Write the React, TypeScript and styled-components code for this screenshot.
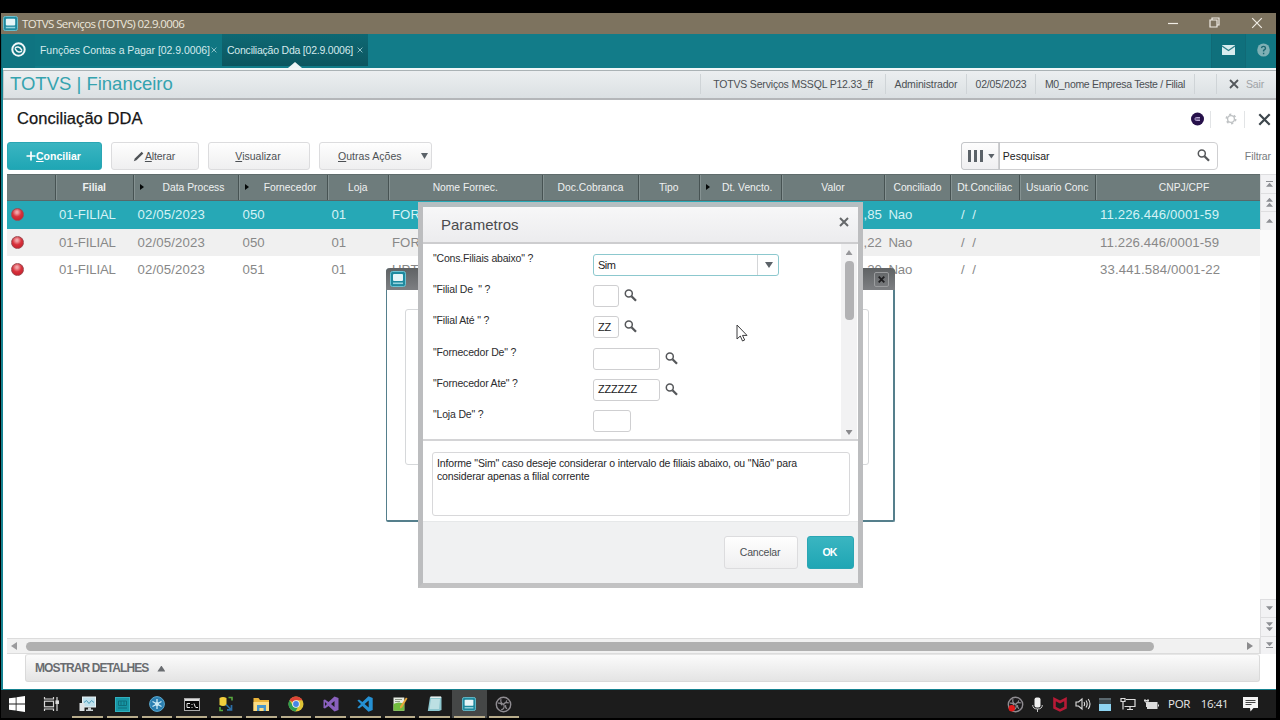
import React from "react";
import styled, { createGlobalStyle } from "styled-components";

const GlobalStyle = createGlobalStyle`
  * {
    box-sizing: border-box;
  }
  body {
    margin: 0;
    background: #000;
    overflow: hidden;
    font-family: "Liberation Sans", Arial, sans-serif;
  }
`;

const Screen = styled.div`
  position: relative;
  display: flex;
  flex-direction: column;
  width: 1280px;
  height: 720px;
  padding: 13px 4px 2px 1px;
  background: #000;
  overflow: hidden;
`;

interface TextProps {
  $size?: number;
  $spacing?: number;
  $color?: string;
  $bold?: boolean;
}

const Text = styled.span<TextProps>`
  font-size: ${({ $size = 10.5 }) => $size}px;
  letter-spacing: ${({ $spacing = 0 }) => $spacing}px;
  color: ${({ $color = "#4c5054" }) => $color};
  font-weight: ${({ $bold }) => ($bold ? 700 : 400)};
  line-height: 1.15;
  white-space: pre;
`;

/* title bar */

const TitleBar = styled.div`
  display: flex;
  align-items: center;
  height: 21px;
  padding-left: 2px;
  background: #7d735f;
`;

const TitleText = styled.span`
  flex: 1;
  margin-left: 4px;
  font-family: "Open Sans", sans-serif;
  font-size: 11.5px;
  letter-spacing: -0.6px;
  line-height: 20px;
  color: #ece7dc;
`;

const WindowControls = styled.div`
  display: flex;
  align-items: center;
  gap: 31px;
  padding: 0 13px 2px 0;
`;

/* tabs */

const TabBar = styled.div`
  display: flex;
  height: 34px;
  background: #127c89;
  border-left: 1px solid #0d6470;
`;

const HomeTab = styled.div`
  display: flex;
  align-items: center;
  justify-content: center;
  width: 33px;
  background: #0f7481;
  padding-bottom: 3px;
`;

const Tab = styled.div<{ $active?: boolean; $width: number }>`
  position: relative;
  display: flex;
  align-items: center;
  justify-content: space-between;
  width: ${({ $width }) => $width}px;
  padding: 0 5px 0 5px;
  margin-bottom: 2px;
  background: ${({ $active }) => ($active ? "linear-gradient(#0e6873, #0c5660)" : "#0f7682")};
`;

const TabNotch = styled.div`
  position: absolute;
  left: 66px;
  bottom: -2px;
  border: 7px solid transparent;
  border-top: 0;
  border-bottom: 6px solid #eef6f7;
`;

const TabIcons = styled.div`
  display: flex;
  margin-left: auto;
`;

const TabIcon = styled.div`
  display: flex;
  align-items: center;
  justify-content: center;
  width: 34px;
  padding-bottom: 3px;
  background: #0f707c;
  border-left: 1px solid #106a76;
  &:last-child {
    width: 31px;
    padding-left: 5px;
    background: #117682;
  }
`;

/* product header */

const Client = styled.div`
  flex: 1;
  display: flex;
  flex-direction: column;
  background: #fff;
  border-left: 2px solid #168290;
  border-bottom: 1px solid #168290;
`;

const ProductBar = styled.div`
  display: flex;
  align-items: center;
  height: 32px;
  border-top: 2px solid #f2f8f9;
  border-bottom: 2px solid #b4b6b9;
  box-shadow: inset 0 1px #aab2b5, inset 1px 0 #c4cacd;
  background: linear-gradient(#eceff1, #dbe0e3);
  padding-left: 7px;
`;

const ProductInfo = styled.div`
  display: flex;
  height: 100%;
  margin-left: auto;
`;

const InfoCell = styled.div<{ $width: number }>`
  display: flex;
  align-items: center;
  justify-content: center;
  gap: 7px;
  width: ${({ $width }) => $width}px;
  margin: 4px 0;
  border-left: 1px solid #cfd4d7;
`;

const PageHeader = styled.div`
  display: flex;
  align-items: center;
  justify-content: space-between;
  height: 36px;
  padding: 0 5px 0 14px;
`;

const PageTitle = styled.h1`
  margin: 0;
  font-size: 16.5px;
  font-weight: 400;
  letter-spacing: 0.05px;
  line-height: 19px;
  color: #161616;
  -webkit-text-stroke: 0.25px #161616;
`;

const HeaderIcons = styled.div`
  display: flex;
  align-items: center;
  height: 17px;
  margin-top: 2px;
`;

const Divider = styled.span`
  width: 1px;
  height: 17px;
  margin: 0 13px 0 6px;
  background: #e2e4e6;
`;

/* toolbar */

const Toolbar = styled.div`
  display: flex;
  height: 38px;
  padding: 6px 5px 4px 4px;
`;

const Button = styled.div<{ $primary?: boolean; $width: number; $height?: number }>`
  display: flex;
  align-items: center;
  justify-content: center;
  width: ${({ $width }) => $width}px;
  height: ${({ $height = 28 }) => $height}px;
  padding-right: 2px;
  border-radius: 3px;
  border: 1px solid ${({ $primary }) => ($primary ? "#2aa6b4" : "#dcdcde")};
  background: ${({ $primary }) =>
    $primary ? "linear-gradient(#3ab5c1, #1fa6b4)" : "linear-gradient(#fefefe, #efeff0)"};
`;

const Actions = styled.div`
  display: flex;
  gap: 9px;
`;

const MenuButton = styled(Button)`
  justify-content: space-between;
  padding: 0 3px 0 18px;
`;

const SearchBox = styled.div`
  display: flex;
  align-items: center;
  width: 257px;
  height: 28px;
  margin-left: auto;
  padding: 0 7px 1px 0;
  border: 1px solid #cfcfd1;
  border-radius: 4px;
`;

const SearchText = styled.span`
  flex: 1;
  font-size: 10.5px;
  color: #222;
`;

const FilterLink = styled.span`
  margin: 8px 0 0 27px;
  font-size: 10.5px;
  letter-spacing: -0.1px;
  line-height: 12px;
  color: #777b7e;
`;

const SearchMode = styled.div`
  display: flex;
  align-items: center;
  justify-content: space-between;
  width: 37px;
  height: 26px;
  margin: 1px 4px 0 0;
  padding: 0 3px 0 6px;
  border-right: 1px solid #cfcfd1;
  border-radius: 3px 0 0 3px;
  box-shadow: 0 0 0 1px #c4c6c9;
  background: linear-gradient(#fdfdfd, #efeff1);
`;

const Bars = styled.span`
  display: flex;
  gap: 3px;
  i {
    width: 3px;
    height: 12px;
    background: #5b6268;
  }
`;

const Arrow = styled.span<{ $dir: "up" | "down" | "left" | "right"; $color?: string; $w?: number; $h?: number }>`
  flex: none;
  display: block;
  width: ${({ $w = 7 }) => $w}px;
  height: ${({ $h = 5 }) => $h}px;
  background: ${({ $color = "#5b6268" }) => $color};
  clip-path: ${({ $dir }) =>
    ({
      up: "polygon(50% 0, 100% 100%, 0 100%)",
      down: "polygon(0 0, 100% 0, 50% 100%)",
      left: "polygon(100% 0, 100% 100%, 0 50%)",
      right: "polygon(0 0, 100% 50%, 0 100%)",
    })[$dir]};
`;

/* grid */

const columns =
  "48.5px 78.5px 105px 89px 60.5px 154.5px 96px 60.5px 82.5px 103px 66px 68.5px 76.5px 1fr";

const GridArea = styled.div`
  flex: 1;
  display: flex;
  padding-left: 4px;
`;

const GridMain = styled.div`
  flex: 1;
  display: flex;
  flex-direction: column;
`;

const GridHeader = styled.div`
  display: grid;
  grid-template-columns: ${columns};
  height: 27px;
  background: #6e7c7c;
  border-top: 1px solid #5f6c6c;
  border-bottom: 1px solid #56696a;
`;

const HeaderCell = styled.div<{ $shift?: number }>`
  position: relative;
  display: flex;
  align-items: center;
  justify-content: center;
  padding-left: ${({ $shift = 0 }) => $shift}px;
  border-right: 1px solid #475353;
  box-shadow: 1px 0 #859292;
  &:last-child {
    border-right: 0;
    box-shadow: none;
  }
`;

const SortMark = styled.span`
  position: absolute;
  left: 6px;
  top: 9px;
  border: 3.5px solid transparent;
  border-left: 4.5px solid #050808;
  border-right: 0;
`;

const GridRow = styled.div<{ $selected?: boolean; $striped?: boolean }>`
  display: grid;
  grid-template-columns: ${columns};
  align-items: center;
  height: 27.5px;
  color: ${({ $selected }) => ($selected ? "#d5f2f5" : "#888")};
  background: ${({ $selected, $striped }) => ($selected ? "#26a8b6" : $striped ? "#f0f0f0" : "#fff")};
`;

const Cell = styled.div<{ $right?: boolean; $indent?: number; $spacing?: number }>`
  padding-left: ${({ $indent = 3.5 }) => $indent}px;
  padding-right: 3px;
  text-align: ${({ $right }) => ($right ? "right" : "left")};
  font-size: 13.2px;
  letter-spacing: ${({ $spacing = 0.05 }) => $spacing}px;
  white-space: pre;
  overflow: hidden;
`;

const Status = styled.span`
  display: block;
  width: 13px;
  height: 13px;
  border-radius: 50%;
  border: 1px solid #9c4a50;
  background: radial-gradient(circle at 45% 30%, #f2a4a8 0 10%, #d8323c 45%, #c01826);
`;

const VScroll = styled.div`
  display: flex;
  flex-direction: column;
  justify-content: space-between;
  width: 16px;
  height: 480px;
  background: #fafafa;
`;

const StepButtons = styled.div`
  display: flex;
  flex-direction: column;
`;

const StepButton = styled.div`
  display: flex;
  flex-direction: column;
  align-items: center;
  justify-content: center;
  gap: 1px;
  height: 18.5px;
  padding-left: 2px;
  background: #f2f2f4;
  border: 1px solid #dedee0;
  border-right: 0;
  border-bottom: 0;
`;

const StepLine = styled.i`
  width: 7px;
  height: 1px;
  background: #8d8f94;
`;

const HScroll = styled.div`
  display: flex;
  align-items: center;
  width: 1253px;
  height: 16px;
  margin-top: auto;
  padding: 0 6px 0 4px;
  border: 1px solid #dcdcdc;
  border-left: 0;
  background: #f1f1f1;
`;

const HThumb = styled.div`
  width: 1128px;
  height: 9px;
  margin: 1px auto 0 9px;
  border-radius: 5px;
  background: #b0b0b0;
`;

const Details = styled.div`
  display: flex;
  align-items: center;
  gap: 9px;
  width: 1235px;
  height: 28px;
  margin: 0 0 7px 22px;
  padding: 1px 0 0 9px;
  border: 1px solid #dadada;
  border-top-color: #e6e6e6;
  border-radius: 3px;
  background: linear-gradient(#fbfbfb, #e4e4e4);
`;

/* window behind the parameters dialog */

const BackWindow = styled.div`
  position: absolute;
  left: 386px;
  top: 268px;
  width: 509px;
  height: 254px;
  border: 1px solid #557f8c;
  border-width: 0 2px 2px 1px;
  border-radius: 4px 4px 2px 2px;
  background: #fff;
`;

const BackTitle = styled.div`
  display: flex;
  align-items: center;
  justify-content: space-between;
  height: 22px;
  margin: 0 -2px 0 -1px;
  padding: 0 6px 0 4px;
  border-radius: 4px 4px 0 0;
  background: linear-gradient(#5f6264, #7d7f82);
`;

const BackClose = styled.span`
  display: flex;
  align-items: center;
  justify-content: center;
  width: 15px;
  height: 15px;
  border: 1px solid #9a9c9e;
  border-radius: 2px;
`;

const BackPanel = styled.div`
  width: 464px;
  height: 156px;
  margin: 19px 0 0 18px;
  border: 1px solid #d6d8da;
  border-radius: 3px;
`;

/* parameters dialog */

const Dialog = styled.div`
  position: absolute;
  left: 418px;
  top: 202px;
  width: 445px;
  height: 386px;
  display: flex;
  flex-direction: column;
  border: 5px solid #bcbdbf;
  border-bottom-color: #c2c2c3;
  border-top-color: #b4bec1;
  background: #fff;
`;

const DialogTitle = styled.div`
  display: flex;
  justify-content: space-between;
  height: 37px;
  padding: 9px 9px 0 18px;
  border-bottom: 2px solid #cdcdcf;
  background: linear-gradient(#f7f7f8, #ececee);
`;

const DialogClose = styled.span`
  margin-top: 1px;
  line-height: 0;
`;

const Form = styled.div`
  display: flex;
  height: 197px;
  border-bottom: 2px solid #d4d4d6;
`;

const Fields = styled.div`
  flex: 1;
  padding: 5px 0 0 10px;
`;

const FieldRow = styled.div`
  display: flex;
  align-items: flex-start;
  height: 31.2px;
`;

const FieldLabel = styled.label`
  width: 160px;
  padding-top: 3px;
  font-size: 10.5px;
  letter-spacing: -0.18px;
  line-height: 12px;
  color: #2c2c2e;
  white-space: pre;
`;

const Input = styled.div<{ $width: number; $focus?: boolean }>`
  display: flex;
  align-items: center;
  justify-content: space-between;
  width: ${({ $width }) => $width}px;
  height: 22px;
  margin-top: 5px;
  padding-left: 4px;
  border: 1px solid ${({ $focus }) => ($focus ? "#8cc8ce" : "#cfcfd1")};
  border-radius: 3px;
`;

const Drop = styled.span`
  display: flex;
  align-items: center;
  justify-content: center;
  width: 21px;
  height: 20px;
  padding-left: 2px;
  border-left: 1px solid #d4d6d8;
`;

const LookupIcon = styled.span`
  margin: 9px 0 0 5px;
  line-height: 0;
`;

const FormScroll = styled.div`
  display: flex;
  flex-direction: column;
  align-items: center;
  width: 16px;
  margin-right: 1px;
  padding: 6px 0 4px;
  background: #f2f2f3;
`;

const FormThumb = styled.div`
  width: 9px;
  height: 59px;
  margin: 6px 0 auto;
  border-radius: 4px;
  background: #b2b2b4;
`;

const Help = styled.div`
  height: 64px;
  margin: 11px 8px 5px 9px;
  padding: 4px;
  border: 1px solid #d8d8da;
  border-radius: 3px;
  font-size: 10.5px;
  letter-spacing: -0.15px;
  line-height: 13px;
  color: #262628;
  white-space: pre;
`;

const DialogFooter = styled.div`
  flex: 1;
  display: flex;
  justify-content: flex-end;
  gap: 9px;
  padding: 14px 4px 0 0;
  border-top: 1px solid #e6e8e9;
  background: #f0f1f2;
`;

const Pointer = styled.svg`
  position: absolute;
  left: 736px;
  top: 324px;
`;

/* taskbar */

const Taskbar = styled.div`
  display: flex;
  height: 28px;
  background: #1c1c1c;
`;

const Task = styled.div<{ $running?: boolean; $active?: boolean }>`
  display: flex;
  align-items: center;
  justify-content: center;
  width: 34.7px;
  background: ${({ $active }) => ($active ? "#454747" : "transparent")};
  padding-top: ${({ $running }) => ($running ? 2 : 0)}px;
  padding-right: ${({ $running }) => ($running ? 0 : 3)}px;
  ${({ $running }) =>
    $running &&
    `
    border: solid transparent;
    border-width: 0 0 2px;
    border-image: linear-gradient(90deg, transparent 4px, #b9ad8c 4px, #b9ad8c 31px, transparent 31px) 2;
  `}
`;

const Tray = styled.div`
  display: flex;
  align-items: center;
  margin-left: auto;
  padding-right: 8px;
`;

const TrayItem = styled.div<{ $width: number }>`
  display: flex;
  align-items: center;
  justify-content: center;
  width: ${({ $width }) => $width}px;
`;

const TrayText = styled.span`
  font-family: "Open Sans", sans-serif;
  font-size: 11.5px;
  letter-spacing: -0.4px;
  line-height: 16px;
  color: #e8e8e8;
`;

function MonitorIcon({ size = 15 }: { size?: number }) {
  return (
    <svg width={size} height={size} viewBox="0 0 16 16">
      <rect x="0.5" y="0.5" width="15" height="15" rx="2" fill="#1f8a9f" stroke="#6cc3d3" />
      <rect x="3" y="3" width="10" height="7" rx="1" fill="#e6f5f8" />
      <rect x="3" y="11.5" width="10" height="1.6" fill="#96d3de" />
    </svg>
  );
}

function CrossIcon({ size, color, width = 1.5 }: { size: number; color: string; width?: number }) {
  return (
    <svg width={size} height={size} viewBox="0 0 10 10">
      <path d="M1 1L9 9M9 1L1 9" stroke={color} strokeWidth={width} />
    </svg>
  );
}

function SearchIcon({ color = "#55575a" }: { color?: string }) {
  return (
    <svg width="13" height="13" viewBox="0 0 13 13" fill="none" stroke={color}>
      <circle cx="4.8" cy="4.6" r="3.5" strokeWidth="1.5" />
      <path d="M7.5 7.3L12 11.8" strokeWidth="2.3" />
    </svg>
  );
}

function ObsIcon({ recording }: { recording?: boolean }) {
  return (
    <svg width="17" height="17" viewBox="0 0 17 17" fill="none">
      <circle cx="8.5" cy="8.5" r="7.2" fill="#1b1a1c" stroke="#8f8c91" strokeWidth="1.4" />
      <path
        d="M6 3.2c-.8 2.8.6 4.7 2.8 5.2M13.8 6.8c-2.8-.5-4.7 0-5 1.6M6.2 13.7c2.4-.4 3.8-2.6 2.6-5.3M3 7.2c2-.5 3.5.2 4 2.2M11.8 4.3c-.4 1.8-1.2 2.9-2.7 3.4M12 12.8c-1.4-1-1.8-2.3-1.3-3.7"
        stroke="#8f8c91"
        strokeWidth="1.2"
      />
      {recording && <circle cx="4.8" cy="12.2" r="3.2" fill="#e01a1a" />}
    </svg>
  );
}

const taskIcons: { running?: boolean; active?: boolean; icon: React.ReactNode }[] = [
  {
    icon: (
      <svg width="16" height="16" viewBox="0 0 16 16" fill="#fff">
        <path d="M0 2.3L6.7 1.4V7.6H0zM7.5 1.3L16 0v7.6H7.5zM0 8.4h6.7v6.2L0 13.7zM7.5 8.4H16V16l-8.5-1.3z" />
      </svg>
    ),
  },
  {
    icon: (
      <svg width="17" height="16" viewBox="0 0 17 16" fill="none" stroke="#d8d8d8" strokeWidth="1.2">
        <path d="M1.5 1v2h9V1M1.5 15v-2h9v2M14 1v14" />
        <rect x="1.5" y="5.2" width="9" height="5.6" />
        <rect x="13" y="5" width="2.4" height="2.4" fill="#e8e8e8" />
      </svg>
    ),
  },
  {
    running: true,
    icon: (
      <svg width="17" height="16" viewBox="0 0 17 16">
        <rect x="3.5" y="1" width="13" height="10" fill="#bfe0ec" stroke="#e8f0f2" />
        <path d="M5 6.5l2.5-2 2.5 3 2.5-3 2.5 2" fill="none" stroke="#4b9cba" />
        <path d="M9 11.5h3v2h2v1.5H7v-1.5h2z" fill="#c9d0d3" />
        <rect x="0.5" y="7" width="5" height="8" fill="#dfe4e6" />
      </svg>
    ),
  },
  {
    running: true,
    icon: (
      <svg width="15" height="15" viewBox="0 0 15 15" fill="none">
        <rect x="0.5" y="0.5" width="14" height="14" fill="#1696a5" stroke="#31b0be" />
        <path d="M3.500 4h8v4.500h-8zM6 4v4.500M9 4v4.500M3 11h9" stroke="#0e6f7c" />
      </svg>
    ),
  },
  {
    running: true,
    icon: (
      <svg width="16" height="16" viewBox="0 0 16 16">
        <circle cx="8" cy="8" r="7.4" fill="#2a7eb0" stroke="#5ba9cf" />
        <path d="M8 3v10M3.5 5.5l9 5M12.5 5.5l-9 5" stroke="#cdeaf5" strokeWidth="1.3" />
        <circle cx="8" cy="8" r="2" fill="#cdeaf5" />
      </svg>
    ),
  },
  {
    running: true,
    icon: (
      <svg width="16" height="13" viewBox="0 0 16 13">
        <rect x="0.5" y="0.5" width="15" height="12" fill="#080808" stroke="#a9a9a9" />
        <rect x="1" y="1" width="14" height="2" fill="#dedede" />
        <path d="M6 5.5H3v4h3M8 6v1M8 9v1M10 5.5l1.5 4M12 9.5h2" fill="none" stroke="#e6e6e6" />
      </svg>
    ),
  },
  {
    running: true,
    icon: (
      <svg width="16" height="16" viewBox="0 0 16 16">
        <path d="M1.5 2Q5 0 8.5 2v7Q5 11 1.5 9z" fill="#f2ce3c" />
        <path d="M10.5 1.5H14v3M2 11v3.5h3" fill="none" stroke="#59a83f" strokeWidth="1.6" />
        <path d="M8 8.5l5.5 5.5M13.5 9v4.8H9" fill="none" stroke="#2c6ea6" strokeWidth="1.7" />
      </svg>
    ),
  },
  {
    running: true,
    icon: (
      <svg width="17" height="15" viewBox="0 0 17 15">
        <path d="M.5 1h5l1.5 2H16v11H.5z" fill="#eab43a" />
        <path d="M.5 5H16v9H.5z" fill="#fbdc83" />
        <path d="M4 14V8h9v6h-2.4v-3H6.4v3z" fill="#4796cb" />
      </svg>
    ),
  },
  {
    running: true,
    icon: (
      <svg width="16" height="16" viewBox="0 0 16 16">
        <circle cx="8" cy="8" r="7.5" fill="#dfc436" />
        <path d="M8 8L1.5 4.2A7.5 7.5 0 0 1 14.5 4.2H8z" fill="#dc4437" />
        <path d="M1.5 4.2A7.5 7.5 0 0 0 7.4 15.5L11 9.5 8 8 5 10z" fill="#2c9d52" />
        <circle cx="8" cy="8" r="3.8" fill="#f4f4f4" />
        <circle cx="8" cy="8" r="2.9" fill="#4585e6" />
      </svg>
    ),
  },
  {
    running: true,
    icon: (
      <svg width="16" height="16" viewBox="0 0 16 16">
        <path d="M11.5.5L15.5 2v12l-4 1.5L5.5 10 2 12.6.5 12V4L2 3.4 5.5 6zM11.5 5L8 8l3.5 3zM2 6v4l2-2z" fillRule="evenodd" fill="#8960bd" />
      </svg>
    ),
  },
  {
    running: true,
    icon: (
      <svg width="16" height="16" viewBox="0 0 16 16">
        <path d="M11.5.3L15.7 2v12l-4.2 1.7L5.4 10 2 12.6.4 11.5 4 8 .4 4.5 2 3.4 5.4 6zM11.7 4.6L7.6 8l4.1 3.4z" fillRule="evenodd" fill="#2591d4" />
      </svg>
    ),
  },
  {
    running: true,
    icon: (
      <svg width="16" height="16" viewBox="0 0 16 16">
        <path d="M1.5 1.5h10.8v13.3H1.5z" fill="#e9eee5" />
        <path d="M1.5 8q5-3 10.8 0v6.8H1.5z" fill="#72bd3e" />
        <path d="M3 3.5h7M3 5.5h5" stroke="#8e9c89" />
        <path d="M8 10.5l6-9 1.5 1-5.5 9-2 1z" fill="#e6a639" />
      </svg>
    ),
  },
  {
    running: true,
    icon: (
      <svg width="15" height="16" viewBox="0 0 15 16">
        <path d="M3 1h11.5v13L12 15H.8z" fill="#8dc7cf" />
        <path d="M4 3h9l-1 10H2.5z" fill="#bce0e3" />
        <path d="M3.5 1.2h10.6" stroke="#e3efef" strokeWidth="1.6" />
      </svg>
    ),
  },
  { running: true, active: true, icon: <MonitorIcon size={14} /> },
  { running: true, icon: <ObsIcon /> },
];

interface Column {
  title: string;
  sorted?: boolean;
  shift?: number;
  bold?: boolean;
}

const headers: Column[] = [
  { title: "" },
  { title: "Filial", bold: true },
  { title: "Data Process", sorted: true, shift: 15 },
  { title: "Fornecedor", sorted: true, shift: 14 },
  { title: "Loja" },
  { title: "Nome Fornec." },
  { title: "Doc.Cobranca" },
  { title: "Tipo" },
  { title: "Dt. Vencto.", sorted: true, shift: 14 },
  { title: "Valor" },
  { title: "Conciliado" },
  { title: "Dt.Conciliac" },
  { title: "Usuario Conc" },
  { title: "CNPJ/CPF", shift: 12 },
];

const rows = [
  { fornecedor: "050", nome: "FORNEC", valor: ",85", cnpj: "11.226.446/0001-59" },
  { fornecedor: "050", nome: "FORNEC", valor: ",22", cnpj: "11.226.446/0001-59" },
  { fornecedor: "051", nome: "UPTA", valor: ",20", cnpj: "33.441.584/0001-22" },
];

const params = [
  { label: '"Filial De  " ?', value: "", width: 26, lookup: true },
  { label: '"Filial Até " ?', value: "ZZ", width: 26, lookup: true },
  { label: '"Fornecedor De" ?', value: "", width: 67, lookup: true },
  { label: '"Fornecedor Ate" ?', value: "ZZZZZZ", width: 67, lookup: true },
  { label: '"Loja De" ?', value: "", width: 38 },
];

function Grid() {
  return (
    <GridArea>
      <GridMain>
        <GridHeader>
          {headers.map((col, i) => (
            <HeaderCell key={i} $shift={col.shift}>
              {col.sorted && <SortMark />}
              <Text $size={10.3} $color="#eef1f1" $bold={col.bold}>
                {col.title}
              </Text>
            </HeaderCell>
          ))}
        </GridHeader>
        {rows.map((row, i) => (
          <GridRow key={i} $selected={i === 0} $striped={i === 1}>
            <Cell>
              <Status />
            </Cell>
            <Cell $spacing={-0.12}>01-FILIAL</Cell>
            <Cell $spacing={0.15}>02/05/2023</Cell>
            <Cell>{row.fornecedor}</Cell>
            <Cell $spacing={-0.2}>01</Cell>
            <Cell>{row.nome}</Cell>
            <Cell />
            <Cell />
            <Cell />
            <Cell $right>{row.valor}</Cell>
            <Cell $spacing={-0.2}>Nao</Cell>
            <Cell $indent={10}>{"/  /"}</Cell>
            <Cell />
            <Cell $indent={4} $spacing={0.12}>
              {row.cnpj}
            </Cell>
          </GridRow>
        ))}
        <HScroll>
          <Arrow $dir="left" $color="#9b9b9d" $w={6} $h={8} />
          <HThumb />
          <Arrow $dir="right" $color="#8b8b8d" $w={6} $h={8} />
        </HScroll>
      </GridMain>
      <VScroll>
        <StepButtons>
          <StepButton>
            <StepLine />
            <Arrow $dir="up" $color="#8d8f94" $h={4} />
          </StepButton>
          <StepButton>
            <Arrow $dir="up" $color="#8d8f94" $h={4} />
            <Arrow $dir="up" $color="#8d8f94" $h={4} />
          </StepButton>
          <StepButton>
            <Arrow $dir="up" $color="#8d8f94" $h={4} />
          </StepButton>
        </StepButtons>
        <StepButtons>
          <StepButton>
            <Arrow $dir="down" $color="#8d8f94" $h={4} />
          </StepButton>
          <StepButton>
            <Arrow $dir="down" $color="#8d8f94" $h={4} />
            <Arrow $dir="down" $color="#8d8f94" $h={4} />
          </StepButton>
          <StepButton>
            <Arrow $dir="down" $color="#8d8f94" $h={4} />
            <StepLine />
          </StepButton>
        </StepButtons>
      </VScroll>
    </GridArea>
  );
}

function ParamsDialog() {
  return (
    <Dialog>
      <DialogTitle>
        <Text $size={15} $color="#4b4b4e">
          Parametros
        </Text>
        <DialogClose>
          <CrossIcon size={10} color="#66686a" width={2} />
        </DialogClose>
      </DialogTitle>
      <Form>
        <Fields>
          <FieldRow>
            <FieldLabel>"Cons.Filiais abaixo" ?</FieldLabel>
            <Input $width={186} $focus>
              <Text $size={11} $spacing={-0.5} $color="#222">
                Sim
              </Text>
              <Drop>
                <Arrow $dir="down" $w={8} $h={6} />
              </Drop>
            </Input>
          </FieldRow>
          {params.map(({ label, value, width, lookup }) => (
            <FieldRow key={label}>
              <FieldLabel>{label}</FieldLabel>
              <Input $width={width}>
                <Text $size={11} $spacing={-0.2} $color="#222">
                  {value}
                </Text>
              </Input>
              {lookup && (
                <LookupIcon>
                  <SearchIcon />
                </LookupIcon>
              )}
            </FieldRow>
          ))}
        </Fields>
        <FormScroll>
          <Arrow $dir="up" $color="#97979a" />
          <FormThumb />
          <Arrow $dir="down" $color="#8a8a8d" />
        </FormScroll>
      </Form>
      <Help>
        {'Informe "Sim" caso deseje considerar o intervalo de filiais abaixo, ou "Não" para\nconsiderar apenas a filial corrente'}
      </Help>
      <DialogFooter>
        <Button $width={74} $height={33}>
          <Text $spacing={-0.2}>Cancelar</Text>
        </Button>
        <Button $primary $width={47} $height={33}>
          <Text $color="#fff" $bold $spacing={-0.8}>
            OK
          </Text>
        </Button>
      </DialogFooter>
    </Dialog>
  );
}

export default function App() {
  return (
    <Screen>
      <GlobalStyle />
      <TitleBar>
        <MonitorIcon />
        <TitleText>TOTVS Serviços (TOTVS) 02.9.0006</TitleText>
        <WindowControls>
          <svg width="10" height="10" viewBox="0 0 10 10">
            <path d="M0 5.5H10" stroke="#f0ece4" strokeWidth="1.2" />
          </svg>
          <svg width="11" height="11" viewBox="0 0 11 11" fill="none" stroke="#f0ece4" strokeWidth="1.2">
            <path d="M1 3h7v7H1zM3 3V1h7v7H8" />
          </svg>
          <CrossIcon size={12} color="#f0ece4" width={1} />
        </WindowControls>
      </TitleBar>
      <TabBar>
        <HomeTab>
          <svg width="15" height="15" viewBox="0 0 15 15" fill="none" stroke="#f2f8f9">
            <circle cx="7.5" cy="7.5" r="6.2" strokeWidth="2" />
            <path d="M4 6.600Q4.600 4.600 7.200 5q2 .3 3.600 3.200M11 8.400q-.6 2-3.200 1.600-2-.3-3.600-3.200" strokeWidth="1.500" />
          </svg>
        </HomeTab>
        <Tab $width={187}>
          <Text $size={10.5} $spacing={-0.05} $color="#d4eaec">
            Funções Contas a Pagar [02.9.0006]
          </Text>
          <CrossIcon size={6} color="#9acbd0" />
        </Tab>
        <Tab $active $width={146}>
          <Text $size={10.5} $spacing={-0.22} $color="#d4eaec">
            Conciliação Dda [02.9.0006]
          </Text>
          <CrossIcon size={6} color="#9acbd0" />
          <TabNotch />
        </Tab>
        <TabIcons>
          <TabIcon>
            <svg width="13" height="10" viewBox="0 0 13 10">
              <rect width="13" height="10" rx="0.5" fill="#d8ecee" />
              <path d="M0 1l6.5 4.5L13 1" fill="none" stroke="#2d7f89" strokeWidth="1.3" />
            </svg>
          </TabIcon>
          <TabIcon>
            <svg width="13" height="14" viewBox="0 0 13 14" fill="none">
              <ellipse cx="6.5" cy="7" rx="6.3" ry="6.6" fill="#7fb0b5" />
              <path d="M4.5 5.2Q4.7 3.4 6.5 3.4T8.5 5.2Q8.5 6.3 6.6 7.4V8.6M6.6 9.8v1.5" stroke="#1b6670" strokeWidth="1.4" />
            </svg>
          </TabIcon>
        </TabIcons>
      </TabBar>
      <Client>
        <ProductBar>
          <Text $size={18.5} $color="#35a3af">
            TOTVS | Financeiro
          </Text>
          <ProductInfo>
            <InfoCell $width={185}>
              <Text $spacing={-0.18}>TOTVS Serviços MSSQL P12.33_ff</Text>
            </InfoCell>
            <InfoCell $width={81}>
              <Text $spacing={-0.15}>Administrador</Text>
            </InfoCell>
            <InfoCell $width={69}>
              <Text $spacing={-0.15}>02/05/2023</Text>
            </InfoCell>
            <InfoCell $width={159}>
              <Text $spacing={-0.32}>M0_nome Empresa Teste / Filial</Text>
            </InfoCell>
            <InfoCell $width={22} />
            <InfoCell $width={60}>
              <CrossIcon size={10} color="#53575b" width={1.8} />
              <Text $spacing={-0.2} $color="#9fa3a6">
                Sair
              </Text>
            </InfoCell>
          </ProductInfo>
        </ProductBar>
        <PageHeader>
          <PageTitle>Conciliação DDA</PageTitle>
          <HeaderIcons>
            <svg width="13" height="14" viewBox="0 0 13 14">
              <circle cx="6.5" cy="7" r="6.5" fill="#26104a" />
              <path d="M9 5.5H5.2Q4 5.5 4 7t1.2 1.5H9M5 7h4" fill="none" stroke="#b9a8d4" />
            </svg>
            <Divider />
            <svg width="14" height="14" viewBox="0 0 14 14" fill="none" stroke="#bfc2c4">
              <circle cx="7" cy="7" r="3.4" strokeWidth="1.3" />
              <circle cx="7" cy="7" r="4.7" strokeWidth="1.6" strokeDasharray="2.2 2.72" />
            </svg>
            <Divider />
            <CrossIcon size={13} color="#3d464c" width={1.7} />
          </HeaderIcons>
        </PageHeader>
        <Toolbar>
          <Actions>
            <Button $primary $width={95}>
              <svg width="10" height="10" viewBox="0 0 10 10">
                <path d="M5 .5v9M.5 5h9" stroke="#fff" strokeWidth="1.7" />
              </svg>
              <Text $bold $color="#fff">
                <u>C</u>onciliar
              </Text>
            </Button>
            <Button $width={88}>
              <svg width="12" height="11" viewBox="0 0 12 11">
                <path d="M.8 10.2l1-2.6L8.7.8l1.6 1.6-6.9 6.9z" fill="#4e5256" />
              </svg>
              <Text $spacing={-0.1}>
                <u>A</u>lterar
              </Text>
            </Button>
            <Button $width={102}>
              <Text>
                <u>V</u>isualizar
              </Text>
            </Button>
            <MenuButton $width={113}>
              <Text $spacing={0.05}>
                <u>O</u>utras Ações
              </Text>
              <Arrow $dir="down" $h={6} />
            </MenuButton>
          </Actions>
          <SearchBox>
            <SearchMode>
              <Bars>
                <i />
                <i />
                <i />
              </Bars>
              <Arrow $dir="down" />
            </SearchMode>
            <SearchText>Pesquisar</SearchText>
            <SearchIcon />
          </SearchBox>
          <FilterLink>Filtrar</FilterLink>
        </Toolbar>
        <Grid />
        <Details>
          <Text $size={12} $bold $spacing={-0.9} $color="#696c70">
            MOSTRAR DETALHES
          </Text>
          <Arrow $dir="up" $color="#696c70" $w={8} $h={6} />
        </Details>
      </Client>
      <Taskbar>
        {taskIcons.map(({ running, active, icon }, i) => (
          <Task key={i} $running={running} $active={active}>
            {icon}
          </Task>
        ))}
        <Tray>
          <TrayItem $width={22}>
            <ObsIcon recording />
          </TrayItem>
          <TrayItem $width={22}>
            <svg width="11" height="15" viewBox="0 0 11 15" fill="none">
              <rect x="2.5" y="0.5" width="6" height="10" rx="2" fill="#f0f0f0" />
              <path d="M.7 8q0 4 4.8 4t4.8-4M5.5 12v3" stroke="#c9c9c9" />
            </svg>
          </TrayItem>
          <TrayItem $width={24}>
            <svg width="14" height="15" viewBox="0 0 14 15">
              <path d="M1.500 2.200L7 5l5.500-2.800v8.600L7 13.400 1.500 10.800z" fill="none" stroke="#b81a36" strokeWidth="2.600" />
            </svg>
          </TrayItem>
          <TrayItem $width={22}>
            <svg width="17" height="14" viewBox="0 0 17 14" fill="none" stroke="#dcdcdc" strokeWidth="1.1">
              <path d="M1 5h2.5L7 2v10L3.500 9H1zM9 5q1.200 2 0 4M11 3.500q2.400 3.500 0 7M13.200 2q3.600 5 0 10" />
            </svg>
          </TrayItem>
          <TrayItem $width={22}>
            <svg width="12" height="13" viewBox="0 0 12 13">
              <rect width="12" height="13" fill="#39464c" />
              <path d="M0 1h12" stroke="#7e8a90" />
              <rect y="6" width="12" height="7" fill="#8ed4f2" />
            </svg>
          </TrayItem>
          <TrayItem $width={24}>
            <svg width="16" height="14" viewBox="0 0 16 14" fill="none" stroke="#dcdcdc" strokeWidth="1.2">
              <path d="M6 2.500h9v7H4.500M7 12.500h6M10 9.500v3M1 1.500h4v3H1zM3 4.500v8" />
            </svg>
          </TrayItem>
          <TrayItem $width={22}>
            <svg width="16" height="11" viewBox="0 0 16 11" fill="none" stroke="#dcdcdc">
              <rect x="4.500" y="3.500" width="9.500" height="6" fill="#dcdcdc" />
              <path d="M15.500 5.500v2M1 1.500h5M2 0v3h3V0M3.500 3v5" />
            </svg>
          </TrayItem>
          <TrayItem $width={34}>
            <TrayText>POR</TrayText>
          </TrayItem>
          <TrayItem $width={37}>
            <TrayText>16:41</TrayText>
          </TrayItem>
          <TrayItem $width={35}>
            <svg width="15" height="15" viewBox="0 0 15 15">
              <path d="M0 0h15v11H10.500L7.500 14.500 7 11H0z" fill="#f4f4f4" />
              <path d="M2.500 3.500h10M2.500 5.500h10M2.500 7.500h6" stroke="#444" />
            </svg>
          </TrayItem>
        </Tray>
      </Taskbar>
      <BackWindow>
        <BackTitle>
          <MonitorIcon size={16} />
          <BackClose>
            <CrossIcon size={7} color="#1e1e20" width={2.6} />
          </BackClose>
        </BackTitle>
        <BackPanel />
      </BackWindow>
      <ParamsDialog />
      <Pointer width="12" height="19" viewBox="0 0 12 19">
        <path d="M1 1v14l3.300-3 2.200 5 2.200-1-2.200-4.600H11z" fill="#fff" stroke="#3c3c3e" />
      </Pointer>
    </Screen>
  );
}
